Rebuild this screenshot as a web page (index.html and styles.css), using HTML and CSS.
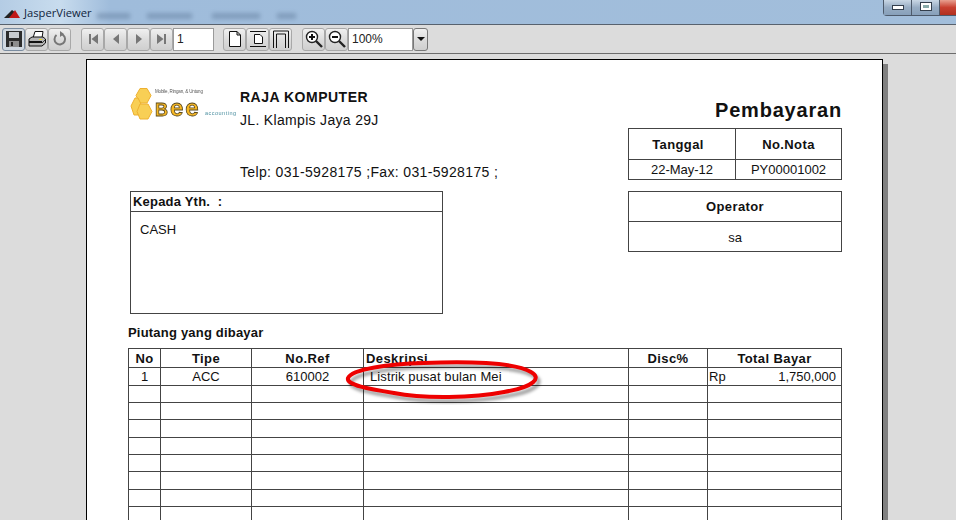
FILE: index.html
```html
<!DOCTYPE html>
<html lang="en">
<head>
	<meta charset="UTF-8">
	<title>JasperViewer</title>
	<link rel="stylesheet" href="styles.css">
</head>
<body>
	<div class="titlebar">
		<svg class="app-icon" width="18" height="12" viewBox="0 0 18 12">
			<path d="M1 11 L9 3 L13 6 L8 11 Z" fill="#222"/>
			<path d="M6 11 L10 6 L12 3 L17 11 Z" fill="#c01818"/>
		</svg>
		<span class="app-name">JasperViewer</span>
		<div class="menu-smudge">
			<span class="m1"></span>
			<span class="m2"></span>
			<span class="m3"></span>
			<span class="m4"></span>
		</div>
		<div class="win-buttons">
			<div class="win-btn"><i class="icon-min"></i></div>
			<div class="win-btn"><i class="icon-max"></i></div>
			<div class="win-btn close"></div>
		</div>
	</div>

	<div class="toolbar">
		<button class="tool active">
			<svg width="18" height="18" viewBox="0 0 18 18"><path d="M1 1 H17 V17 H1 Z" fill="#2c2c2c"/><rect x="4" y="2" width="10" height="6" fill="#c8ccd0"/><rect x="4" y="11" width="10" height="6" fill="#8d8d8d"/><rect x="6" y="12" width="2" height="4" fill="#222"/></svg>
		</button>
		<button class="tool">
			<svg width="20" height="18" viewBox="0 0 20 18"><path d="M6 8 L8 1.5 H16 L15 8 Z" fill="#fff" stroke="#111"/><path d="M2 9 L5 7 H16 L18.5 9 V13 L15 16 H2 Z" fill="#b5b5b5" stroke="#111"/><path d="M2 12 H15" stroke="#111" stroke-width="2"/><path d="M15 13 L18 10" stroke="#333"/><rect x="12" y="9" width="3" height="1" fill="#e6d830"/></svg>
		</button>
		<button class="tool">
			<svg width="16" height="16" viewBox="0 0 16 16"><path d="M4.5 4 A5.3 5.3 0 1 0 9 3" fill="none" stroke="#777" stroke-width="2"/><path d="M8 0 V6 L12 3 Z" fill="#777"/></svg>
		</button>
		<div class="sep"></div>
		<button class="tool"><svg width="12" height="12" viewBox="0 0 12 12"><path d="M2 1 H4 V11 H2 Z M11 1 V11 L4.5 6 Z" fill="#777"/></svg></button>
		<button class="tool"><svg width="12" height="12" viewBox="0 0 12 12"><path d="M9 1 V11 L3 6 Z" fill="#777"/></svg></button>
		<button class="tool"><svg width="12" height="12" viewBox="0 0 12 12"><path d="M3 1 V11 L9 6 Z" fill="#777"/></svg></button>
		<button class="tool"><svg width="12" height="12" viewBox="0 0 12 12"><path d="M10 1 H8 V11 H10 Z M1 1 V11 L7.5 6 Z" fill="#777"/></svg></button>
		<div class="field page-field">1</div>
		<div class="sep small"></div>
		<button class="tool">
			<svg width="14" height="16" viewBox="0 0 14 16"><path d="M1.5 .5 H9 L12.5 4 V15.5 H1.5 Z M9 .5 V4 H12.5" fill="#fff" stroke="#111"/></svg>
		</button>
		<button class="tool">
			<svg width="18" height="16" viewBox="0 0 18 16"><path d="M1 .5 H17 M1 15.5 H17" stroke="#111"/><path d="M5.5 3.5 H11 L13.5 6 V12.5 H5.5 Z" fill="#fff" stroke="#111"/></svg>
		</button>
		<button class="tool">
			<svg width="18" height="18" viewBox="0 0 18 18"><path d="M1.5 18 V1 H16.5 V18 M4.5 18 V4 H13.5 V18" fill="none" stroke="#111"/></svg>
		</button>
		<div class="sep"></div>
		<button class="tool">
			<svg width="20" height="20" viewBox="0 0 20 20"><circle cx="8" cy="8" r="5.5" fill="#fff" stroke="#222" stroke-width="1.4"/><path d="M5 8 H11 M8 5 V11" stroke="#111" stroke-width="2"/><path d="M12 12 L18 18" stroke="#222" stroke-width="2.4"/></svg>
		</button>
		<button class="tool">
			<svg width="20" height="20" viewBox="0 0 20 20"><circle cx="8" cy="8" r="5.5" fill="#fff" stroke="#222" stroke-width="1.4"/><path d="M5 8 H11" stroke="#111" stroke-width="2"/><path d="M12 12 L18 18" stroke="#222" stroke-width="2.4"/></svg>
		</button>
		<div class="field zoom-field">100%</div>
		<button class="tool drop"><i class="arrow-down"></i></button>
	</div>

	<div class="viewer">
		<div class="page">
			<div class="report-top">
				<div class="company">
					<div class="company-head">
						<svg class="logo" width="108" height="38" viewBox="0 0 108 38">
							<g fill="#f8cf55" stroke="#eeb030" stroke-width="1">
								<path d="M10 .5 H17 L21 7.5 L17 15 H10 L6 7.5 Z"/>
								<path d="M5 10 H8 L12 18 L8 27 H4 L1 18 Z"/>
								<path d="M10 16 H18 L22 23.5 L18 31 H10 L7 23.5 Z"/>
							</g>
							<text x="25" y="4.8" class="logo-tag" textLength="48">Mobile, Ringan, &amp; Untung</text>
							<text x="25" y="27.5" class="logo-bee"><tspan class="bee-b">B</tspan><tspan class="bee-e">ee</tspan></text>
							<text x="75" y="27" class="logo-sub" textLength="31">accounting</text>
						</svg>
						<div>
							<div class="company-name">RAJA KOMPUTER</div>
							<div class="company-line">JL. Klampis Jaya 29J</div>
						</div>
					</div>
					<div class="company-phone">Telp: 031-5928175 ;Fax: 031-5928175 ;</div>
				</div>
				<div class="doc-head">
					<div class="doc-title">Pembayaran</div>
					<div class="box nota">
						<div class="cell head shift">Tanggal</div>
						<div class="cell head">No.Nota</div>
						<div class="cell">22-May-12</div>
						<div class="cell">PY00001002</div>
					</div>
				</div>
			</div>

			<div class="report-mid">
				<div class="box kepada">
					<div class="kepada-head">Kepada Yth. &nbsp;:</div>
					<div class="kepada-body">CASH</div>
				</div>
				<div class="box operator">
					<div class="cell head">Operator</div>
					<div class="cell value">sa</div>
				</div>
			</div>

			<div class="section-title">Piutang yang dibayar</div>

			<div class="paid-wrap">
				<table class="paid">
					<colgroup>
						<col class="c-no"><col class="c-tipe"><col class="c-ref"><col class="c-desk"><col class="c-disc"><col class="c-total">
					</colgroup>
					<thead>
						<tr>
							<th>No</th><th>Tipe</th><th>No.Ref</th><th class="left">Deskripsi</th><th>Disc%</th><th>Total Bayar</th>
						</tr>
					</thead>
					<tbody>
						<tr class="first">
							<td>1</td><td>ACC</td><td>610002</td><td class="desk">Listrik pusat bulan Mei</td><td></td>
							<td class="money"><span class="cur">Rp</span><span class="amt">1,750,000</span></td>
						</tr>
						<tr class="h17"><td></td><td></td><td></td><td></td><td></td><td></td></tr>
						<tr class="h17"><td></td><td></td><td></td><td></td><td></td><td></td></tr>
						<tr class="h18"><td></td><td></td><td></td><td></td><td></td><td></td></tr>
						<tr class="h17"><td></td><td></td><td></td><td></td><td></td><td></td></tr>
						<tr class="h17"><td></td><td></td><td></td><td></td><td></td><td></td></tr>
						<tr class="h18"><td></td><td></td><td></td><td></td><td></td><td></td></tr>
						<tr class="h17"><td></td><td></td><td></td><td></td><td></td><td></td></tr>
						<tr class="h17"><td></td><td></td><td></td><td></td><td></td><td></td></tr>
					</tbody>
				</table>
				<svg class="scribble" width="204" height="48" viewBox="0 0 204 48">
					<path class="scribble-shadow" d="M7 25 C11 16 48 11 83 10 C123 8 173 9 190 19 C201 25 193 34 163 39 C133 45 83 46 53 40 C28 36 5 32 7 25 Z"/>
					<path class="scribble-line" d="M4 21 C8 12 45 7 80 6 C120 4 170 5 187 15 C198 21 190 30 160 35 C130 41 80 42 50 36 C25 32 2 28 4 21 Z"/>
				</svg>
			</div>
		</div>
		<div class="page-shadow"></div>
	</div>
</body>
</html>
```

FILE: styles.css
```css
/* Window */
html, body {
	margin: 0;
	height: 520px;
	overflow: hidden;
}
body {
	font-family: 'Liberation Sans', Arial, sans-serif;
	background: #dcdcdc;
	color: #111;
}

/* Title bar */
.titlebar {
	height: 24px;
	border-bottom: 1px solid #58626e;
	background: linear-gradient(90deg, #b4cce4 0, #c8dcee 60px, #9fbcdb 110px, #a2bedb 100%);
	display: flex;
	align-items: center;
	position: relative;
}
.app-icon {
	margin: 1px 3px 0 3px;
}
.app-name {
	font-family: 'Open Sans', 'Liberation Sans', sans-serif;
	font-size: 11.2px;
	color: #10233c;
}
.menu-smudge {
	display: flex;
	margin: 7px 0 0 5px;
	filter: blur(2px);
	opacity: .45;
}
.menu-smudge span {
	height: 6px;
	background: #5d7898;
}
.m1 { width: 33px; margin-right: 17px; }
.m2 { width: 45px; margin-right: 20px; }
.m3 { width: 48px; margin-right: 17px; }
.m4 { width: 19px; }
.win-buttons {
	position: absolute;
	top: 0;
	right: 0;
	display: flex;
	height: 15px;
	width: 72px;
	border: 1px solid #4d5a6b;
	border-top: 0;
	border-right: 0;
	border-radius: 0 0 0 4px;
	box-shadow: inset 0 0 0 1px rgba(255, 255, 255, .6);
}
.win-btn {
	width: 27px;
	flex: none;
	display: flex;
	align-items: center;
	justify-content: center;
	background: linear-gradient(#c9d7e5, #97acc3 50%, #87a0ba);
	border-right: 1px solid #4d5a6b;
}
.win-btn.close {
	flex: 1;
	width: auto;
	border: 0;
	background: linear-gradient(#e8a090, #c84030 50%, #b03020);
}
.icon-min {
	width: 10px;
	height: 3px;
	background: #fff;
	border: 1px solid #333e4c;
}
.icon-max {
	width: 6px;
	height: 3px;
	border: 2px solid #fff;
	outline: 1px solid #333e4c;
	background: #8aa;
	margin-top: -3px;
}

/* Toolbar */
.toolbar {
	height: 28px;
	border-bottom: 1px solid #6c6c6c;
	display: flex;
	align-items: center;
	padding-left: 2px;
	background: #dcdcdc;
}
.tool {
	width: 23px;
	height: 23px;
	padding: 0;
	flex: none;
	display: flex;
	align-items: center;
	justify-content: center;
	border: 1px solid #a8a8a8;
	border-radius: 3px;
	background: linear-gradient(#f0f0f0, #dcdcdc 50%, #cfcfcf);
}
.tool.active {
	border-color: #7a8ca0;
	background: #d0d8e0;
}
.sep {
	width: 10px;
	flex: none;
}
.sep.small {
	width: 9px;
}
.field {
	height: 21px;
	background: #fff;
	border: 1px solid #9a9a9a;
	font-size: 12px;
	line-height: 21px;
	padding-left: 3px;
	color: #222;
}
.page-field {
	width: 36px;
}
.zoom-field {
	width: 60px;
}
.tool.drop {
	width: 15px;
	border-color: #777;
}
.arrow-down {
	border-left: 4px solid transparent;
	border-right: 4px solid transparent;
	border-top: 4px solid #111;
}

/* Report page */
.viewer {
	position: relative;
	height: 466px;
	overflow: hidden;
}
.page {
	position: absolute;
	left: 86px;
	top: 5px;
	width: 797px;
	height: 600px;
	background: #fff;
	border: 1px solid #000;
	padding: 0 40px 0 41px;
	box-sizing: border-box;
}
.page-shadow {
	position: absolute;
	left: 883px;
	top: 10px;
	width: 5px;
	height: 600px;
	background: #808080;
}
.report-top {
	display: flex;
	justify-content: space-between;
	height: 131px;
}
.company {
	padding: 26px 0 0 2px;
}
.company-head {
	display: flex;
	gap: 2px;
	height: 77px;
}
.logo {
	margin-top: 2px;
	flex: none;
	filter: blur(.3px);
}
.logo-tag {
	font-size: 4.5px;
	fill: #555;
}
.logo-bee {
	font-family: 'Liberation Sans', sans-serif;
	font-weight: bold;
	fill: #f7b722;
	stroke: #5a4a20;
	stroke-width: .8;
	letter-spacing: 2px;
}
.bee-b { font-size: 18px; }
.bee-e { font-size: 24px; }
.logo-sub {
	font-size: 5.5px;
	fill: #4c8fa0;
}
.company-name {
	font-size: 14px;
	font-weight: bold;
	line-height: 18px;
	margin-top: 2px;
	letter-spacing: .5px;
}
.company-line {
	font-size: 14px;
	line-height: 18px;
	margin-top: 5px;
	letter-spacing: .32px;
}
.company-phone {
	font-size: 14px;
	line-height: 18px;
	margin-left: 110px;
	letter-spacing: .35px;
}
.doc-head {
	width: 214px;
	padding-top: 38px;
}
.doc-title {
	font-size: 20px;
	font-weight: bold;
	text-align: right;
	line-height: 24px;
	letter-spacing: .8px;
	margin-bottom: 6px;
}
.box {
	border: 1px solid #444;
	box-sizing: border-box;
	background: #fff;
}
.cell {
	font-size: 13px;
	text-align: center;
	display: flex;
	align-items: center;
	justify-content: center;
}
.cell.head {
	font-weight: bold;
	letter-spacing: .4px;
}
.cell.shift {
	padding-right: 8px;
}
.cell.value {
	padding-top: 2px;
	box-sizing: border-box;
}
.nota {
	display: grid;
	grid-template-columns: 107px 105px;
	grid-template-rows: 31px 19px;
	height: 52px;
}
.nota .cell:nth-child(odd) {
	border-right: 1px solid #444;
}
.nota .head {
	border-bottom: 1px solid #444;
}
.report-mid {
	display: flex;
	justify-content: space-between;
	align-items: flex-start;
	padding-left: 2px;
}
.kepada {
	width: 313px;
	height: 123px;
}
.kepada-head {
	font-size: 13px;
	font-weight: bold;
	line-height: 19px;
	padding-left: 2px;
	border-bottom: 1px solid #444;
	letter-spacing: .2px;
}
.kepada-body {
	font-size: 13px;
	padding: 10px 0 0 9px;
}
.operator {
	width: 214px;
	height: 61px;
}
.operator .cell {
	height: 29px;
}
.operator .head {
	border-bottom: 1px solid #444;
}
.section-title {
	font-size: 13px;
	font-weight: bold;
	line-height: 16px;
	margin-top: 11px;
	letter-spacing: .2px;
}

/* Paid table */
.paid-wrap {
	position: relative;
	margin-top: 7px;
}
.paid {
	border-collapse: collapse;
	table-layout: fixed;
	width: 714px;
	font-size: 13px;
}
.paid th, .paid td {
	border: 1px solid #444;
	padding: 0;
	text-align: center;
	height: 18px;
	line-height: 14px;
}
.paid th {
	letter-spacing: .4px;
	padding-top: 1px;
	height: 17px;
}
.paid .left {
	text-align: left;
	padding-left: 2px;
}
.paid .first td {
	height: 16px;
	padding-top: 1px;
}
.paid td.desk {
	text-align: left;
	padding-left: 6px;
	letter-spacing: .1px;
}
.paid td.money {
	padding: 1px 5px 0 1px;
}
.cur {
	float: left;
}
.amt {
	float: right;
}
.paid .h17 td { height: 16px; }
.paid .h18 td { height: 17px; }
.c-no { width: 32px; }
.c-tipe { width: 91px; }
.c-ref { width: 112px; }
.c-desk { width: 265px; }
.c-disc { width: 79px; }
.c-total { width: 134px; }
.scribble {
	position: absolute;
	left: 216px;
	top: 9px;
}
.scribble path {
	fill: none;
}
.scribble-shadow {
	stroke: rgba(0, 0, 0, .35);
	stroke-width: 4;
	filter: blur(1.5px);
}
.scribble-line {
	stroke: #ee0000;
	stroke-width: 4;
}
```
